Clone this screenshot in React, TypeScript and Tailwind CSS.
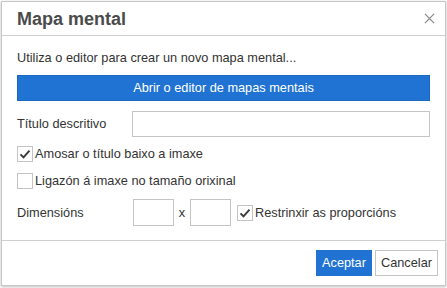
import React from 'react'

function Check() {
  return (
    <svg viewBox="0 0 16 16" className="w-[12px] h-[12px]">
      <path d="M2 8.5 L6 12.5 L14 3.5" fill="none" stroke="#3a3a3a" strokeWidth="2.6" strokeLinejoin="miter" />
    </svg>
  )
}

function Box({ checked }: { checked?: boolean }) {
  return (
    <span className="w-[16px] h-[16px] shrink-0 border border-[#c4c4c4] bg-white flex items-center justify-center">
      {checked && <Check />}
    </span>
  )
}

export default function App() {
  return (
    <div className="w-[447px] h-[288px] bg-white p-px" style={{ fontFamily: '"Liberation Sans", Arial, sans-serif' }}>
      <div className="w-[445px] h-[285px] border border-[#c6c6c6] bg-white flex flex-col shadow-[0_1px_3px_rgba(0,0,0,0.25)]">
        <div className="h-[34px] shrink-0 border-b border-[#cfcfcf] flex items-center justify-between pl-[15px] pr-[10px]">
          <span className="text-[18px] font-bold text-[#4b4b4b] leading-none">Mapa mental</span>
          <svg viewBox="0 0 12 12" className="w-[11px] h-[11px]">
            <path d="M1 1 L11 11 M11 1 L1 11" stroke="#8a8a8a" strokeWidth="1.4" />
          </svg>
        </div>
        <div className="flex-1 px-[15px] pt-[14px] text-[12.75px] leading-[16px] text-[#333]">
          <p>Utiliza o editor para crear un novo mapa mental...</p>
          <button className="mt-[9px] w-full h-[26px] bg-[#2173d3] text-white border border-[#1d68c2]">
            Abrir o editor de mapas mentais
          </button>
          <div className="mt-[10px] flex items-center">
            <span className="w-[116px]">Título descritivo</span>
            <input className="w-[301px] h-[26px] border border-[#c4c4c4] outline-none" />
          </div>
          <label className="mt-[9px] flex items-center gap-[2px]">
            <Box checked />
            <span>Amosar o título baixo a imaxe</span>
          </label>
          <label className="mt-[11px] flex items-center gap-[2px]">
            <Box />
            <span>Ligazón á imaxe no tamaño orixinal</span>
          </label>
          <div className="mt-[10px] flex items-center">
            <span className="w-[116px]">Dimensións</span>
            <input className="w-[41px] h-[27px] border border-[#c4c4c4] outline-none" />
            <span className="w-[16px] text-center">x</span>
            <input className="w-[41px] h-[27px] border border-[#c4c4c4] outline-none" />
            <label className="ml-[6px] flex items-center gap-[2px]">
              <Box checked />
              <span>Restrinxir as proporcións</span>
            </label>
          </div>
        </div>
        <div className="h-[45px] shrink-0 border-t border-[#cfcfcf] flex items-start justify-end gap-[3px] pt-[9px] pr-[7px] text-[12.75px]">
          <button className="w-[56px] h-[26px] bg-[#2173d3] text-white">Aceptar</button>
          <button className="w-[63px] h-[26px] bg-white text-[#333] border border-[#c4c4c4]">Cancelar</button>
        </div>
      </div>
    </div>
  )
}
